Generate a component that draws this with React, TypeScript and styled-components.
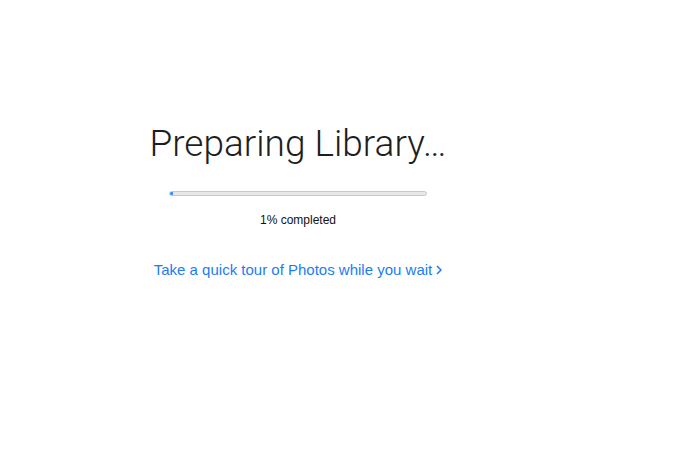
import React from "react";
import styled, { createGlobalStyle } from "styled-components";

const Global = createGlobalStyle`
  html, body { margin: 0; padding: 0; background: #fff; }
  body { font-family: "Liberation Sans", Arial, sans-serif; }
`;

const Page = styled.div`
  width: 673px;
  height: 466px;
  background: #fff;
  display: flex;
  align-items: flex-start;
  padding-left: 138px;
  box-sizing: border-box;
`;

const Column = styled.div`
  width: 320px;
  margin-top: 122px;
  display: flex;
  flex-direction: column;
  align-items: center;
`;

const Title = styled.h1`
  margin: 0;
  font-family: Roboto, "Liberation Sans", sans-serif;
  font-weight: 300;
  font-size: 37px;
  line-height: 44px;
  color: #1e1e1e;
  white-space: nowrap;
`;

const Track = styled.div`
  margin-top: 25px;
  width: 258px;
  height: 5px;
  border-radius: 3px;
  background: #e7e7e7;
  border: 1px solid #c9c9c9;
  box-sizing: border-box;
  overflow: hidden;
  display: flex;
`;

const Fill = styled.div`
  height: 100%;
  background: #3d8ef5;
`;

const Status = styled.div`
  margin-top: 17px;
  font-size: 12px;
  line-height: 14px;
  color: #111;
`;

const Link = styled.a`
  margin-top: 34px;
  font-size: 15px;
  line-height: 18px;
  color: #1c7cf4;
  text-decoration: none;
  white-space: nowrap;
  display: flex;
  align-items: center;
  gap: 4px;
  cursor: pointer;
`;

export default function App() {
  const pct = 1;
  return (
    <>
      <Global />
      <Page>
        <Column>
          <Title>Preparing Library…</Title>
          <Track>
            <Fill style={{ width: `${pct}%` }} />
          </Track>
          <Status>{pct}% completed</Status>
          <Link>
            Take a quick tour of Photos while you wait
            <svg width="6" height="10" viewBox="0 0 6 10">
              <path d="M1 1l4 4-4 4" fill="none" stroke="#1c7cf4" strokeWidth="1.5" />
            </svg>
          </Link>
        </Column>
      </Page>
    </>
  );
}
